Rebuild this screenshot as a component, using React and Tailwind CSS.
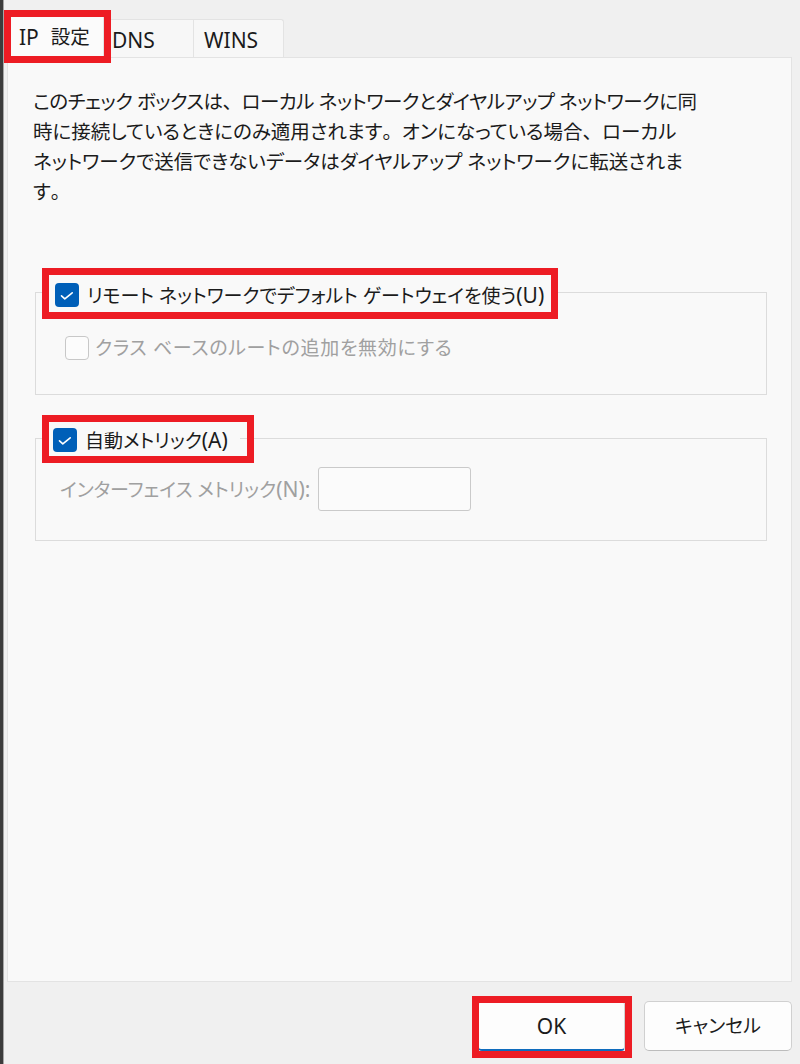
import React from "react";

const L = ({ children }) => <span className="text-[21px]">{children}</span>;
const P = ({ children }) => <span className="[font-feature-settings:normal]">{children}</span>;

const Checked = () => (
  <span className="flex h-[24px] w-[24px] shrink-0 items-center justify-center rounded-[4px] bg-[#005fb8]">
    <svg viewBox="0 0 24 24" className="h-[24px] w-[24px]" fill="none" stroke="white" strokeWidth="1.6" strokeLinecap="round" strokeLinejoin="round">
      <polyline points="6.5,12.8 9.8,15.8 17.2,9.8" />
    </svg>
  </span>
);

const Unchecked = () => (
  <span className="block h-[24px] w-[24px] shrink-0 rounded-[4px] border border-[#c8c8c8] bg-[#fcfcfc]" />
);

export default function App() {
  return (
    <div className="relative flex h-[1064px] w-[800px] overflow-hidden bg-[#f0f0f0] font-['Noto_Sans','Noto_Sans_CJK_JP',sans-serif] text-[19px] leading-[30px] text-[#1b1b1b] [font-feature-settings:'palt']">
      <div className="w-[3px] shrink-0 bg-[#3c3c3c]" />
      <div className="w-[1px] shrink-0 bg-[#a6a6a6]" />
      <div className="flex min-w-0 flex-1 flex-col pl-[3px] pr-[8px]">
        {/* Tabs */}
        <div className="flex h-[57px] shrink-0 items-end pl-[1px]">
          <div className="relative z-10 -mb-px flex h-[44px] w-[96px] items-center rounded-t-[3px] border border-b-0 border-[#e3e3e3] bg-[#fbfbfb] pl-[10px] whitespace-nowrap">
            <L>IP</L>
            <span className="ml-[12px] text-[19.5px]">設定</span>
          </div>
          <div className="flex h-[38px] w-[89px] items-center border-l border-t border-[#e3e3e3] bg-[#f7f7f7] pl-[7px] pt-[3px]">
            <L>DNS</L>
          </div>
          <div className="flex h-[38px] w-[91px] items-center rounded-tr-[3px] border-l border-r border-t border-[#e3e3e3] bg-[#f7f7f7] pl-[10px] pt-[3px]">
            <L>WINS</L>
          </div>
        </div>

        {/* Panel */}
        <div className="flex flex-1 flex-col border border-[#e3e3e3] bg-[#f9f9f9] pl-[25px] pr-[24px] pt-[29px]">
          <div className="flex flex-col whitespace-nowrap text-[19.5px]">
            <span className="tracking-[-0.5px]">このチェック ボックスは<P>、</P>ローカル ネットワークとダイヤルアップ ネットワークに同</span>
            <span>時に接続しているときにのみ適用されます<P>。</P>オンになっている場合<P>、</P>ローカル</span>
            <span>ネットワークで送信できないデータはダイヤルアップ ネットワークに転送されま</span>
            <span>す<P>。</P></span>
          </div>

          {/* Group 1 */}
          <div className="ml-[2px] mt-[74px] flex flex-col">
            <div className="relative z-10 ml-[14px] flex h-[28px] items-center gap-[8px] self-start bg-[#f9f9f9] pl-[6px] pr-[14px] whitespace-nowrap">
              <Checked />
              <span>リモート ネットワークでデフォルト ゲートウェイを使う<L>(U)</L></span>
            </div>
            <div className="-mt-[17px] h-[103px] border border-[#dcdcdc] pl-[29px] pt-[41px]">
              <div className="flex h-[28px] items-center gap-[6px] whitespace-nowrap text-[#a0a0a0]">
                <Unchecked />
                <span className="tracking-[0.7px]">クラス ベースのルートの追加を無効にする</span>
              </div>
            </div>
          </div>

          {/* Group 2 */}
          <div className="ml-[2px] mt-[31px] flex flex-col">
            <div className="relative z-10 ml-[14px] flex h-[28px] items-center gap-[8px] self-start bg-[#f9f9f9] pl-[4px] pr-[12px] whitespace-nowrap">
              <Checked />
              <span>自動メトリック<L>(A)</L></span>
            </div>
            <div className="-mt-[16px] h-[103px] border border-[#dcdcdc] pl-[24px] pt-[28px]">
              <div className="flex items-center whitespace-nowrap text-[#a0a0a0]">
                <span className="w-[258px] shrink-0">インターフェイス メトリック<L>(N):</L></span>
                <div className="h-[44px] w-[153px] rounded-[3px] border border-[#cacaca] bg-[#fbfbfb]" />
              </div>
            </div>
          </div>
        </div>

        {/* Buttons */}
        <div className="flex h-[82px] shrink-0 justify-end gap-[19px] pt-[19px]">
          <button className="flex h-[50px] w-[147px] items-center justify-center rounded-[4px] border border-[#d0d0d0] border-b-2 border-b-[#0f6cbd] bg-[#fdfdfd] text-[#1b1b1b]">
            <L>OK</L>
          </button>
          <button className="flex h-[50px] w-[148px] items-center justify-center rounded-[5px] border border-[#d0d0d0] border-b-[#bcbcbc] bg-[#fdfdfd] text-[#1b1b1b]">
            キャンセル
          </button>
        </div>
      </div>

      {/* Red annotation boxes */}
      <div className="pointer-events-none absolute left-[4px] top-[10px] z-20 h-[53px] w-[107px] border-[7px] border-[#ed1c24]" />
      <div className="pointer-events-none absolute left-[42px] top-[268px] z-20 h-[51px] w-[516px] border-[7px] border-[#ed1c24]" />
      <div className="pointer-events-none absolute left-[42px] top-[415px] z-20 h-[48px] w-[212px] border-[7px] border-[#ed1c24]" />
      <div className="pointer-events-none absolute left-[472px] top-[996px] z-20 h-[62px] w-[160px] border-[7px] border-[#ed1c24]" />
    </div>
  );
}
